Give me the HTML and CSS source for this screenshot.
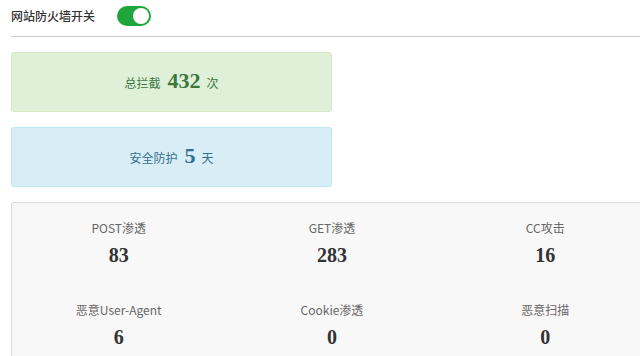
FILE: index.html
```html
<!DOCTYPE html>
<html lang="zh">
<head>
<meta charset="utf-8">
<link rel="stylesheet" href="styles.css">
</head>
<body>
<div class="page">
  <div class="header">
    <span class="title">网站防火墙开关</span>
    <span class="toggle"><span class="knob"></span></span>
  </div>
  <div class="alert alert-green">总拦截 <b class="big">432</b> 次</div>
  <div class="alert alert-blue">安全防护 <b class="big">5</b> 天</div>
  <div class="stats">
    <div class="item"><div class="label">POST渗透</div><div class="num">83</div></div>
    <div class="item"><div class="label">GET渗透</div><div class="num">283</div></div>
    <div class="item"><div class="label">CC攻击</div><div class="num">16</div></div>
    <div class="item"><div class="label">恶意User-Agent</div><div class="num">6</div></div>
    <div class="item"><div class="label">Cookie渗透</div><div class="num">0</div></div>
    <div class="item"><div class="label">恶意扫描</div><div class="num">0</div></div>
  </div>
</div>
</body>
</html>
```
FILE: styles.css
```css
html, body {
  margin: 0;
  padding: 0;
  overflow: hidden;
  background: #fff;
}
body {
  font-family: "Noto Sans CJK SC", "Noto Sans", sans-serif;
  font-size: 12px;
  color: #333;
}
.page {
  width: 642px;
  padding-left: 11px;
}
.header {
  display: flex;
  align-items: center;
  height: 31px;
  padding-bottom: 5px;
  border-bottom: 1px solid #ccc;
}
.title {
  font-size: 12px;
  color: #333;
  font-weight: 500;
}
.toggle {
  display: inline-block;
  position: relative;
  width: 34px;
  height: 20px;
  border-radius: 10px;
  background: #20a53a;
  margin-left: 22px;
}
.knob {
  position: absolute;
  right: 2px;
  top: 2px;
  width: 16px;
  height: 16px;
  border-radius: 50%;
  background: #fff;
}
.alert {
  width: 50%;
  box-sizing: border-box;
  height: 60px;
  border: 1px solid;
  border-radius: 3px;
  display: flex;
  align-items: center;
  justify-content: center;
  font-size: 12px;
}
.alert-green {
  margin-top: 15px;
  background: #dff0d8;
  border-color: #d6e9c6;
  color: #3c763d;
}
.alert-blue {
  margin-top: 15px;
  background: #d9edf7;
  border-color: #bce8f1;
  color: #31708f;
}
.big {
  font-family: "Liberation Serif", "DejaVu Serif", serif;
  font-weight: bold;
  font-size: 22px;
  margin: 0 6px 0 7px;
  position: relative;
  top: -1px;
}
.stats {
  margin-top: 15px;
  border: 1px solid #ddd;
  border-radius: 3px;
  background: #f9f8f8;
  display: grid;
  grid-template-columns: repeat(3, 1fr);
  row-gap: 33px;
  padding: 15px 0 20px;
}
.item {
  text-align: center;
}
.label {
  line-height: 20px;
  color: #666;
  font-size: 12px;
}
.num {
  margin-top: 5px;
  line-height: 24px;
  font-family: "Liberation Serif", "DejaVu Serif", serif;
  font-weight: bold;
  font-size: 20px;
  color: #333;
}
```
